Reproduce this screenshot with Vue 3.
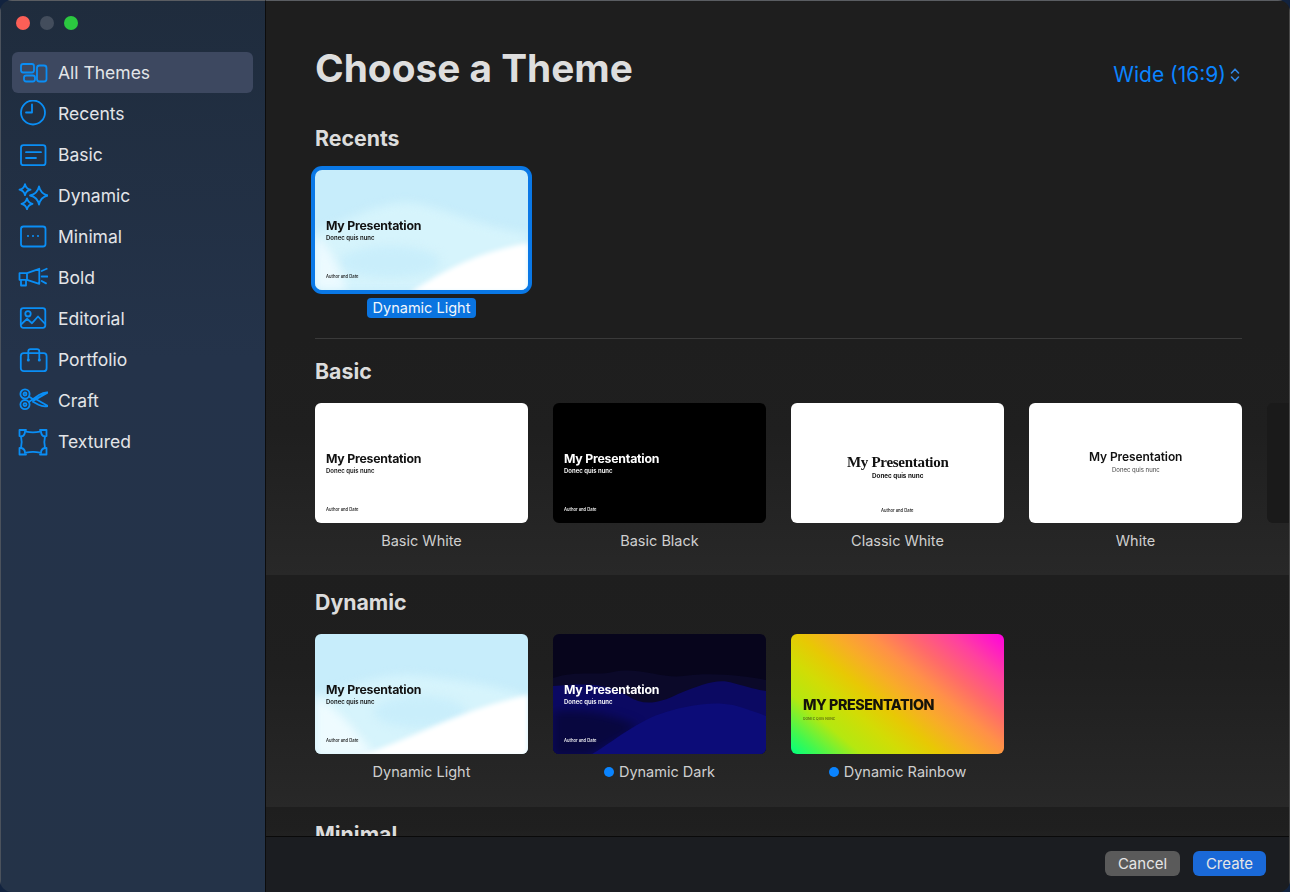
<script setup>
import { ref } from 'vue'

const active = ref('All Themes')

const navItems = ['All Themes', 'Recents', 'Basic', 'Dynamic', 'Minimal', 'Bold', 'Editorial', 'Portfolio', 'Craft', 'Textured']

const author = 'Author and Date'
const sub = 'Donec quis nunc'
const title = 'My Presentation'

const sections = [
  {
    name: 'Basic',
    themes: [
      { label: 'Basic White', kind: 'white', author },
      { label: 'Basic Black', kind: 'black', author },
      { label: 'Classic White', kind: 'classic', author },
      { label: 'White', kind: 'plain' },
      { label: '', kind: 'peek', empty: true },
    ],
  },
  {
    name: 'Dynamic',
    themes: [
      { label: 'Dynamic Light', kind: 'sky', author },
      { label: 'Dynamic Dark', kind: 'dark', author, dot: true },
      { label: 'Dynamic Rainbow', kind: 'rainbow', dot: true },
    ],
  },
]
</script>

<template>
  <div class="window">
    <aside class="sidebar">
      <div class="traffic">
        <span class="lamp red"></span>
        <span class="lamp grey"></span>
        <span class="lamp green"></span>
      </div>
      <nav class="nav">
        <div
          v-for="item in navItems"
          :key="item"
          class="nav-item"
          :class="{ selected: item === active }"
          @click="active = item"
        >
          <svg class="nav-icon" viewBox="0 0 30 28" fill="none">
            <template v-if="item === 'All Themes'">
              <rect x="3" y="5" width="13" height="8.5" rx="2.2" />
              <rect x="6" y="16.5" width="11" height="6" rx="2.2" />
              <rect x="19" y="6.5" width="9.5" height="16" rx="2.5" />
            </template>
            <template v-else-if="item === 'Recents'">
              <circle cx="15" cy="12.5" r="12" />
              <path d="M14 4.5v8H8" />
            </template>
            <template v-else-if="item === 'Basic'">
              <rect x="3" y="4.2" width="24.5" height="20" rx="2.5" />
              <path d="M8 11.2h15M8 17h10" />
            </template>
            <template v-else-if="item === 'Dynamic'">
              <path d="M21 4.5Q22.6 11.9 30 13.5Q22.6 15.1 21 22.5Q19.4 15.1 12 13.5Q19.4 11.9 21 4.5Z" />
              <path d="M7 2.2Q8 6.7 12.5 7.7Q8 8.7 7 13.2Q6 8.7 1.5 7.7Q6 6.7 7 2.2Z" />
              <path d="M9 16.3Q10 20.8 14.5 21.8Q10 22.8 9 27.3Q8 22.8 3.5 21.8Q8 20.8 9 16.3Z" />
            </template>
            <template v-else-if="item === 'Minimal'">
              <rect x="3" y="3.5" width="24.5" height="20" rx="2.5" />
              <circle class="solid" cx="10" cy="13" r="1.1" />
              <circle class="solid" cx="15" cy="13" r="1.1" />
              <circle class="solid" cx="20" cy="13" r="1.1" />
            </template>
            <template v-else-if="item === 'Bold'">
              <path d="M9 9.2L21.3 4.8V19.8L9 15.8V9.2H1.5V15.8H9" />
              <path d="M3 15.8V21.5H8V15.8" />
              <path d="M23.7 7L28.7 4.8M23.7 12.5H29.3M23.7 17L28 19.4" />
            </template>
            <template v-else-if="item === 'Editorial'">
              <rect x="2.8" y="3.2" width="24.5" height="19.6" rx="2.5" />
              <circle cx="10" cy="8.8" r="2.7" />
              <path d="M3 19.5L9 13.8L14 18.2L20 11.5L27.2 19" />
            </template>
            <template v-else-if="item === 'Portfolio'">
              <rect x="2.8" y="7.2" width="25.8" height="18" rx="3" />
              <path d="M10.3 13.8V5.5Q10.3 3.2 12.5 3.2H19Q21.3 3.2 21.3 5.5V13.8" />
              <circle class="solid" cx="10.3" cy="14" r="1.5" />
              <circle class="solid" cx="21.3" cy="14" r="1.5" />
            </template>
            <template v-else-if="item === 'Craft'">
              <circle cx="7" cy="7" r="4.6" />
              <circle cx="7" cy="7" r="1.5" />
              <circle cx="7" cy="17.6" r="4.6" />
              <circle cx="7" cy="17.6" r="1.5" />
              <path d="M10.8 15L21 8Q26 4.8 30 5.4L15.5 13.6" />
              <path d="M10.8 9.6L15.5 12.4M18.5 12.5L30 19Q25 20 20.5 17.8L15 14.8" />
            </template>
            <template v-else>
              <path d="M8 3.6Q15 5 22 3.6M8 24.6Q15 23.2 22 24.6M3 8.5Q4.4 14 3 20M27 8.5Q25.6 14 27 20" />
              <path d="M1.5 8V2H8M3 8.5Q6.8 8 7 3.6M22 2H28.5V8M23 3.6Q23.2 8 27 8.5M1.5 20V26.5H8M3 20Q6.8 20.5 7 24.6M22 26.5H28.5V20M23 24.6Q23.2 20.5 27 20" />
            </template>
          </svg>
          <span class="nav-label">{{ item }}</span>
        </div>
      </nav>
    </aside>

    <main class="main">
      <div class="scroller">
        <header class="top">
          <h1 class="page-title">Choose a Theme</h1>
          <button class="ratio" type="button">
            Wide (16:9)
            <svg class="updown" viewBox="0 0 10 16" fill="none">
              <path d="M1.5 6L5 2.2L8.5 6M1.5 10L5 13.8L8.5 10" />
            </svg>
          </button>
        </header>

        <section class="recents">
          <h2 class="heading">Recents</h2>
          <div class="row">
            <figure class="theme">
              <div class="slide sky is-picked">
                <svg class="art" viewBox="0 0 213 120" preserveAspectRatio="none">
                  <path class="soft" fill="#d6f4fc" d="M0 62C30 52 55 36 85 33C115 30 150 54 213 64V120H0Z" />
                  <ellipse class="soft" fill="#c9eefb" cx="75" cy="92" rx="50" ry="16" />
                  <path class="soft" fill="#ecfaff" d="M0 66C15 75 22 95 32 120H0Z" />
                  <path class="soft-sm" fill="#ffffff" d="M95 122C125 105 150 85 213 73V122Z" />
                </svg>
                <p class="s-title">{{ title }}</p>
                <p class="s-sub">{{ sub }}</p>
                <p class="s-author">{{ author }}</p>
              </div>
              <figcaption class="caption"><span class="picked">Dynamic Light</span></figcaption>
            </figure>
          </div>
        </section>

        <section v-for="section in sections" :key="section.name" class="band" :class="section.name.toLowerCase()">
          <h2 class="heading">{{ section.name }}</h2>
          <div class="row">
            <figure v-for="theme in section.themes" :key="theme.kind" class="theme">
              <div class="slide" :class="theme.kind">
                <svg v-if="theme.kind === 'sky'" class="art" viewBox="0 0 213 120" preserveAspectRatio="none">
                  <path class="soft" fill="#d6f4fc" d="M0 62C40 50 75 38 105 42C140 45 170 50 213 62V120H0Z" />
                  <path class="soft" fill="#eefbff" d="M0 62C20 72 40 95 60 122H0Z" />
                  <ellipse class="soft" fill="#c9eefb" cx="105" cy="78" rx="46" ry="16" />
                  <path class="soft-sm" fill="#ffffff" d="M40 122C90 110 140 76 213 61V122Z" />
                </svg>
                <svg v-else-if="theme.kind === 'dark'" class="art" viewBox="0 0 213 120" preserveAspectRatio="none">
                  <path class="soft-xs" fill="#0b0929" d="M0 44C25 36 45 42 60 38C85 32 110 45 130 42C160 38 190 42 213 46V120H0Z" />
                  <path class="soft-xs" fill="#0b0962" d="M0 52C30 50 50 48 75 62C90 72 105 70 125 60C150 50 165 44 180 49C195 53 205 56 213 57V120H0Z" />
                  <path class="soft" fill="#08073f" d="M0 78C25 74 60 80 85 92C70 105 50 112 36 122H0Z" />
                  <path class="soft-xs" fill="#0c0c78" d="M36 122C60 108 85 86 113 78C135 71 160 67 180 71C195 75 205 79 213 82V122Z" />
                </svg>
                <template v-if="!theme.empty">
                  <p class="s-title">{{ theme.kind === 'rainbow' ? 'MY PRESENTATION' : title }}</p>
                  <p class="s-sub">{{ theme.kind === 'rainbow' ? 'DONEC QUIS NUNC' : sub }}</p>
                  <p v-if="theme.author" class="s-author">{{ theme.author }}</p>
                </template>
              </div>
              <figcaption class="caption">
                <span v-if="theme.dot" class="dot"></span>{{ theme.label }}
              </figcaption>
            </figure>
          </div>
        </section>

        <section class="band minimal">
          <h2 class="heading">Minimal</h2>
        </section>
      </div>

      <footer class="footer">
        <button class="btn cancel" type="button">Cancel</button>
        <button class="btn create" type="button">Create</button>
      </footer>
    </main>
  </div>
</template>

<style scoped>
.window {
  width: 1290px;
  height: 892px;
  display: flex;
  overflow: hidden;
  border-radius: 12px;
  font-family: Inter, "Liberation Sans", sans-serif;
}
.sidebar {
  width: 266px;
  flex-shrink: 0;
  background: linear-gradient(180deg, #1f2c3d 0%, #24334a 40%, #243348 100%);
  border-right: 1px solid #0c0c0c;
  border-left: 1px solid #4b525c;
  border-top: 1px solid #5a5d62;
  box-sizing: border-box;
  padding: 0 12px 0 11px;
}
.traffic {
  display: flex;
  gap: 10px;
  padding: 15px 0 0 4px;
  height: 51px;
  box-sizing: border-box;
}
.lamp {
  width: 14px;
  height: 14px;
  border-radius: 50%;
}
.red { background: #fb5f57; }
.grey { background: #434d5c; }
.green { background: #2bc840; }
.nav {
  display: flex;
  flex-direction: column;
}
.nav-item {
  height: 41px;
  display: flex;
  align-items: center;
  padding-left: 6px;
  border-radius: 6px;
  color: #e3e5e8;
  font-size: 17.5px;
  cursor: default;
}
.nav-item.selected {
  background: #3d4860;
}
.nav-icon {
  width: 30px;
  height: 28px;
  margin-right: 10px;
  flex-shrink: 0;
  stroke: #0a8ef5;
  stroke-width: 1.8;
  stroke-linejoin: round;
  stroke-linecap: round;
}
.nav-icon .solid {
  fill: #0a8ef5;
  stroke: none;
}
.main {
  flex: 1;
  min-width: 0;
  display: flex;
  flex-direction: column;
  background: #1e1e1e;
  border-top: 1px solid #5a5d62;
  border-right: 1px solid #4a4a4a;
}
.scroller {
  flex: 1;
  min-height: 0;
  overflow: hidden;
}
.top {
  height: 123px;
  box-sizing: border-box;
  padding: 43px 49px 0 49px;
  display: flex;
  justify-content: space-between;
  align-items: center;
}
.page-title {
  margin: 0;
  font-size: 38.8px;
  line-height: 48px;
  font-weight: 700;
  color: #dedede;
  position: relative;
  top: -16px;
}
.ratio {
  background: none;
  border: 0;
  padding: 0;
  display: flex;
  align-items: center;
  gap: 4px;
  font: inherit;
  font-size: 21px;
  line-height: 28px;
  color: #0a84ff;
  position: relative;
  top: -9px;
}
.updown {
  width: 10px;
  height: 16px;
  stroke: #2f86e6;
  stroke-width: 1.6;
  stroke-linecap: round;
  stroke-linejoin: round;
}
.heading {
  margin: 0 0 18px;
  font-size: 21.3px;
  line-height: 28px;
  font-weight: 700;
  color: #dcdcdc;
}
.recents {
  padding: 0 0 20px 49px;
  height: 214px;
  box-sizing: border-box;
}
.band {
  padding: 13px 0 0 49px;
  background: linear-gradient(180deg, #1e1e1e 0%, #1f1f1f 40%, #282828 100%);
}
.band.basic {
  height: 237px;
  box-sizing: border-box;
  padding-top: 19px;
  position: relative;
}
.band.basic::before {
  content: '';
  position: absolute;
  left: 49px;
  right: 47px;
  top: 0;
  height: 1px;
  background: #3a3a3a;
}
.band.dynamic {
  height: 232px;
  box-sizing: border-box;
}
.band.minimal {
  height: 40px;
  overflow: hidden;
}
.row {
  display: flex;
  gap: 25px;
  width: 1100px;
}
.theme {
  margin: 0;
  width: 213px;
  flex-shrink: 0;
}
.slide {
  position: relative;
  width: 213px;
  height: 120px;
  box-sizing: border-box;
  border-radius: 6px;
  overflow: hidden;
  padding: 49px 11px 0;
  display: flex;
  flex-direction: column;
  background: #fff;
  color: #111;
}
.slide p {
  margin: 0;
  position: relative;
  white-space: nowrap;
  will-change: transform;
}
.art {
  position: absolute;
  inset: 0;
  width: 100%;
  height: 100%;
}
.soft { filter: blur(5px); }
.soft-sm { filter: blur(2.5px); }
.soft-xs { filter: blur(0.6px); }
.s-title {
  font-size: 12.3px;
  line-height: 14px;
  font-weight: 700;
  letter-spacing: -0.22px;
}
.s-sub {
  font-size: 6px;
  line-height: 8px;
  font-weight: 600;
  margin-top: 1px !important;
}
.s-author {
  font-size: 4.2px;
  line-height: 6px;
  font-weight: 500;
  margin-top: 32px !important;
}
.black {
  background: #000;
  color: #fff;
}
.classic {
  align-items: center;
  padding-top: 51px;
}
.classic .s-title {
  font-family: "Liberation Serif", serif;
  font-size: 15px;
  line-height: 17px;
  font-weight: 700;
  letter-spacing: -0.3px;
}
.classic .s-sub {
  font-size: 6.3px;
  font-weight: 700;
  margin-top: 1px !important;
}
.classic .s-author { margin-top: 28px !important; }
.plain {
  align-items: center;
  padding-top: 47px;
}
.plain .s-title {
  font-weight: 600;
  letter-spacing: -0.1px;
  font-size: 12px;
}
.plain .s-sub {
  font-weight: 400;
  color: #444;
  margin-top: 2px !important;
}
.peek {
  background: #1a1a1a;
}
.sky {
  background: #c7edfb;
}
.dark {
  background: #07051c;
  color: #fff;
}
.rainbow {
  background: linear-gradient(40deg, #00ff7f 0%, #40f850 8%, #b4e810 20%, #d2dc05 32%, #e8c804 42%, #f8ac28 52%, #ff9048 62%, #ff6a6a 72%, #ff40a0 85%, #ff00e0 100%);
  padding: 63px 12px 0;
}
.rainbow .s-title {
  font-size: 14.3px;
  line-height: 16px;
  font-weight: 800;
  letter-spacing: -0.45px;
  color: #15130a;
}
.rainbow .s-sub {
  font-size: 3.4px;
  line-height: 5px;
  font-weight: 500;
  margin-top: 4px !important;
  color: #555a10;
}
.is-picked {
  box-shadow: 0 0 0 4px #0a78e6;
  border-radius: 7px;
  overflow: visible;
}
.is-picked .art {
  border-radius: 7px;
}
.caption {
  margin-top: 8px;
  height: 20px;
  line-height: 20px;
  text-align: center;
  font-size: 14.5px;
  color: #cfcfcf;
}
.picked {
  display: inline-block;
  padding: 0 6px;
  background: #0a74e0;
  border-radius: 4px;
  color: #f2f6fb;
}
.dot {
  display: inline-block;
  width: 10px;
  height: 10px;
  border-radius: 50%;
  background: #0a84ff;
  margin-right: 5px;
}
.footer {
  height: 56px;
  flex-shrink: 0;
  box-sizing: border-box;
  border-top: 1px solid #0a0a0a;
  background: #1b1d21;
  display: flex;
  justify-content: flex-end;
  align-items: center;
  gap: 13px;
  padding: 0 23px 2px 0;
}
.btn {
  height: 25px;
  border: 0;
  border-radius: 6px;
  padding: 0;
  font: inherit;
  font-size: 15px;
  color: #e6e6e6;
}
.cancel {
  width: 75px;
  background: #5a5a5a;
}
.create {
  width: 73px;
  background: #1a69d8;
}
</style>

<style>
html, body {
  margin: 0;
  background: #12233f;
  overflow: hidden;
}
</style>
